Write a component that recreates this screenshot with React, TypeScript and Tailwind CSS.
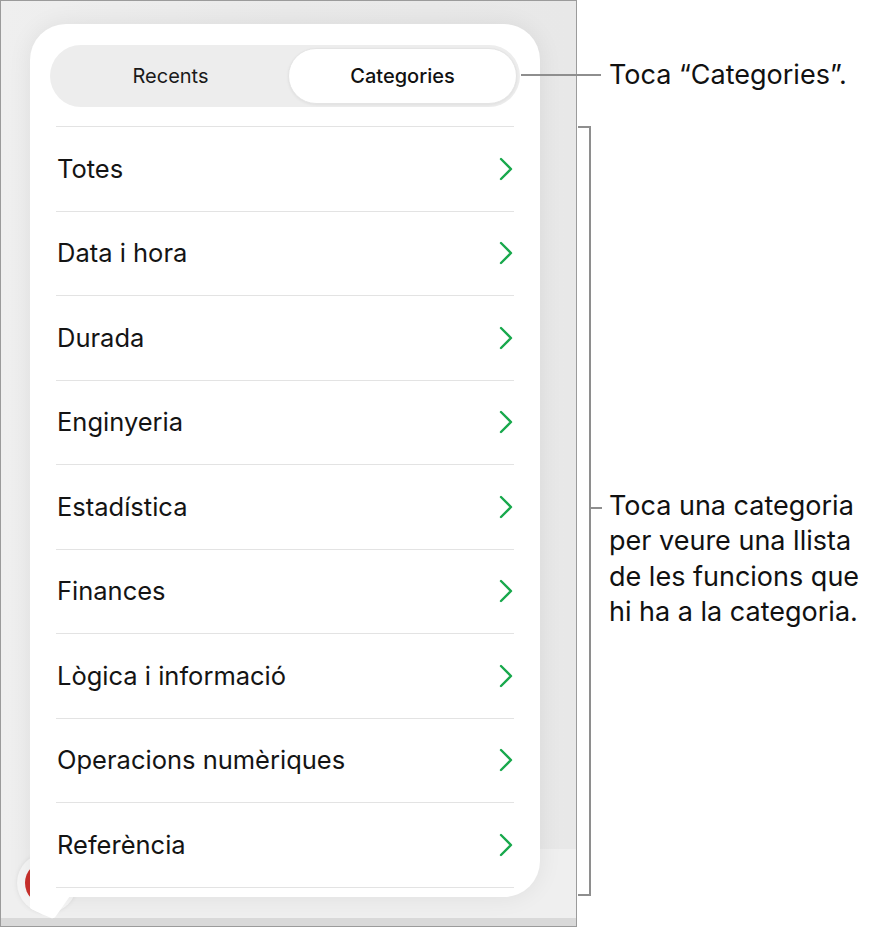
import React from "react";

const items = [
  "Totes",
  "Data i hora",
  "Durada",
  "Enginyeria",
  "Estadística",
  "Finances",
  "Lògica i informació",
  "Operacions numèriques",
  "Referència",
];

function Chevron() {
  return (
    <svg width="16" height="24" viewBox="0 0 16 24" className="shrink-0">
      <path d="M3 2 L13 12 L3 22" fill="none" stroke="#18a84c" strokeWidth="2.4" strokeLinecap="round" strokeLinejoin="round" />
    </svg>
  );
}

export default function App() {
  return (
    <div className="relative w-[896px] h-[928px] bg-white flex text-[#111]" style={{ fontFamily: "Inter, 'Noto Sans', 'Liberation Sans', sans-serif" }}>
      {/* device frame */}
      <div className="relative w-[577px] h-[927px] border border-[#9b9b9b] bg-[#ebebeb] flex flex-col overflow-hidden shrink-0">
        <div className="flex-1 bg-gradient-to-r from-[#efefef] via-[#eaeaea] to-[#e8e8e8]" />
        <div className="h-[69px] bg-[#efefef] relative">
          {/* red button partially hidden */}
          <div className="absolute left-[16px] top-[4px] w-[60px] h-[60px] rounded-full bg-[#f6f6f6] shadow-[0_0_4px_rgba(0,0,0,0.08)] flex items-center justify-center">
            <div className="w-[44px] h-[44px] rounded-full bg-[#c9302c]" />
          </div>
        </div>
        <div className="h-[8px] bg-[#d9d9d9]" />

        {/* popover */}
        <div className="absolute left-[29px] top-[23px] w-[510px] h-[873px] bg-white rounded-[36px] rounded-bl-none shadow-[0_0_24px_rgba(0,0,0,0.07)] flex flex-col px-[20px] pt-[21px]">
          <div className="h-[62px] rounded-full bg-[#ededed] flex items-center p-[3px]">
            <div className="flex-1 h-full flex items-center justify-center text-[20px] text-[#1a1a1a]">Recents</div>
            <div className="w-[229px] h-full rounded-full bg-white border border-[#e4e4e4] shadow-[0_1px_3px_rgba(0,0,0,0.06)] flex items-center justify-center text-[20px] font-medium text-[#111]">Categories</div>
          </div>
          <div className="mt-[19px] mx-[6px] flex flex-col">
            {items.map((t) => (
              <div key={t} className="h-[84.5px] border-t border-[#e3e3e3] flex items-center justify-between pl-[1px] pr-0">
                <span className="text-[25.5px] text-[#141414]">{t}</span>
                <Chevron />
              </div>
            ))}
            <div className="border-t border-[#e3e3e3]" />
          </div>
          {/* tail */}
          <svg className="absolute left-0 top-[872px]" width="50" height="24" viewBox="0 0 50 24">
            <path d="M0 0 L0 12 Q2 14 21 22 Q24 23 26 20 L40 0 Z" fill="#ffffff" />
          </svg>
        </div>
      </div>

      {/* annotation: Categories */}
      <div className="absolute left-[521px] top-[74px] w-[80px] h-[2px] bg-[#8e8e8e]" />
      {/* bracket */}
      <div className="absolute left-[578px] top-[126px] w-[13px] h-[2px] bg-[#8e8e8e]" />
      <div className="absolute left-[589px] top-[126px] w-[2px] h-[770px] bg-[#8e8e8e]" />
      <div className="absolute left-[578px] top-[894px] w-[13px] h-[2px] bg-[#8e8e8e]" />
      <div className="absolute left-[589px] top-[507px] w-[13px] h-[2px] bg-[#8e8e8e]" />

      <div className="flex flex-col pl-[32px] text-[27px] text-[#111] whitespace-nowrap">
        <div className="mt-[58px] leading-[34px]">Toca “Categories”.</div>
        <div className="mt-[396px] leading-[35.3px]">
          Toca una categoria
          <br />
          per veure una llista
          <br />
          de les funcions que
          <br />
          hi ha a la categoria.
        </div>
      </div>
    </div>
  );
}
